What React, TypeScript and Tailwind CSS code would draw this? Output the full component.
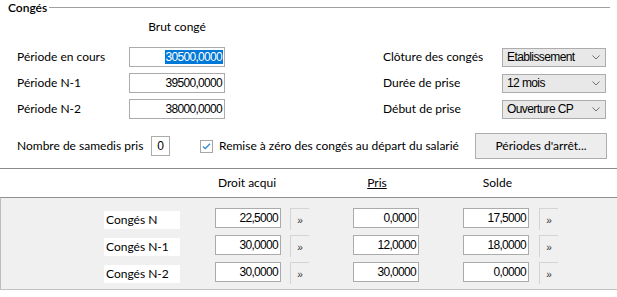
import React from "react";

const ui = { fontFamily: 'Lato, "Noto Sans", sans-serif' };
const narrow = { fontFamily: '"Liberation Sans", Arial, sans-serif' };

function NumBox({ value, selected = false, w = "w-[96px]" }: { value: string; selected?: boolean; w?: string }) {
  return (
    <div
      className={`${w} h-[20px] border border-[#ababab] bg-white flex items-center justify-end pr-[1px] text-[12px] tracking-[-0.7px] text-black whitespace-nowrap`}
      style={narrow}
    >
      {selected ? (
        <span className="bg-[#0078d7] text-white leading-[14px] pl-[1px] pr-[1px]">{value}</span>
      ) : (
        <span className="pr-[1px]">{value}</span>
      )}
    </div>
  );
}

function Select({ value }: { value: string }) {
  return (
    <div className="w-[104px] h-[19px] border border-[#acacac] bg-[#e8e8e8] flex items-center justify-between pl-[4px] pr-[5px]">
      <span className="text-[12px] tracking-[-0.6px] text-black whitespace-nowrap" style={narrow}>
        {value}
      </span>
      <svg width="8" height="5" viewBox="0 0 8 5">
        <polyline points="0.5,0.5 4,4 7.5,0.5" fill="none" stroke="#707070" strokeWidth="1" />
      </svg>
    </div>
  );
}

function Chevrons() {
  return (
    <div className="w-[19px] h-[22px] border-l border-t border-[#d4d4d4] flex items-center justify-center text-[10px] text-[#333] pt-[2px]" style={narrow}>
      »
    </div>
  );
}

function DataRow({ label, a, b, c }: { label: string; a: string; b: string; c: string }) {
  return (
    <div className="flex items-start h-[28px]">
      <div className="w-[103px]" />
      <div className="w-[76px] h-[18px] mt-[3px] bg-white flex items-center pl-[2px] text-[12px] text-black whitespace-nowrap">{label}</div>
      <div className="w-[35px]" />
      <NumBox value={a} w="w-[66px]" />
      <div className="w-[9px]" />
      <Chevrons />
      <div className="w-[44px]" />
      <NumBox value={b} w="w-[66px]" />
      <div className="w-[44px]" />
      <NumBox value={c} w="w-[66px]" />
      <div className="w-[10px]" />
      <Chevrons />
    </div>
  );
}

export default function App() {
  return (
    <div className="w-[617px] h-[297px] bg-white overflow-hidden text-[12px] text-black flex flex-col whitespace-nowrap" style={ui}>
      {/* Group header */}
      <div className="flex items-center h-[15px] pl-[8px] pr-[7px]">
        <span className="text-[12px] font-semibold leading-[15px] text-black">Congés</span>
        <div className="flex-1 h-px bg-[#a0a0a0] ml-[2px] mt-[-1px]" />
      </div>
      {/* Brut congé header */}
      <div className="h-[32px] flex items-start pt-[4px]">
        <div className="w-[129px]" />
        <div className="w-[96px] text-center leading-[16px]">Brut congé</div>
      </div>
      {/* Three rows */}
      <div className="flex flex-col gap-[6px] pl-[17px]">
        {[
          ["Période en cours", "30500,0000", "Clôture des congés", "Etablissement"],
          ["Période N-1", "39500,0000", "Durée de prise", "12 mois"],
          ["Période N-2", "38000,0000", "Début de prise", "Ouverture CP"],
        ].map(([l, v, rl, rv], i) => (
          <div key={l} className="flex items-center h-[20px]">
            <div className="w-[112px]">{l}</div>
            <NumBox value={v} selected={i === 0} />
            <div className="w-[158px]" />
            <div className="w-[119px]">{rl}</div>
            <Select value={rv} />
          </div>
        ))}
      </div>
      {/* Samedis row */}
      <div className="flex items-center pl-[17px] mt-[14px] h-[26px]">
        <div className="w-[134px]">Nombre de samedis pris</div>
        <div className="w-[19px] h-[20px] border border-[#ababab] flex items-center justify-center text-[12px]" style={narrow}>
          0
        </div>
        <div className="w-[30px]" />
        <svg width="13" height="13" viewBox="0 0 13 13" className="shrink-0">
          <rect x="0.5" y="0.5" width="12" height="12" fill="#fff" stroke="#a6a6a6" />
          <polyline points="3,6.5 5.2,8.7 10,3.8" fill="none" stroke="#2f86d6" strokeWidth="1.3" />
        </svg>
        <div className="w-[6px]" />
        <div className="w-[256px]">Remise à zéro des congés au départ du salarié</div>
        <div className="w-[132px] h-[26px] border border-[#adadad] bg-[#ededed] flex items-center justify-center">
          Périodes d'arrêt...
        </div>
      </div>
      {/* Separator */}
      <div className="h-px bg-[#8a8a8a] mt-[9px]" />
      {/* Column headers */}
      <div className="flex items-center h-[28px]">
        <div className="w-[214px]" />
        <div className="w-[66px] text-center">Droit acqui</div>
        <div className="w-[72px]" />
        <div className="w-[50px] text-center underline">Pris</div>
        <div className="w-[110px] text-right pr-[0px]">Solde</div>
      </div>
      {/* Grey panel */}
      <div className="border-t border-[#8f8f8f] border-b border-b-[#c2c2c2] border-l border-l-[#bdbdbd] bg-[#f0f0f0] h-[93px] pt-[10px] flex flex-col">
        <DataRow label="Congés N" a="22,5000" b="0,0000" c="17,5000" />
        <DataRow label="Congés N-1" a="30,0000" b="12,0000" c="18,0000" />
        <DataRow label="Congés N-2" a="30,0000" b="30,0000" c="0,0000" />
      </div>
    </div>
  );
}
